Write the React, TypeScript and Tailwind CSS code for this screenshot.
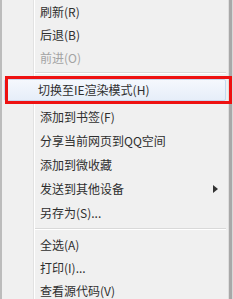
type Item = { label: string; disabled?: boolean; sub?: boolean };

const top: Item[] = [{ label: '刷新(R)' }, { label: '后退(B)' }, { label: '前进(O)', disabled: true }];
const middle: Item[] = [
  { label: '添加到书签(F)' },
  { label: '分享当前网页到QQ空间' },
  { label: '添加到微收藏' },
  { label: '发送到其他设备', sub: true },
  { label: '另存为(S)...' },
];
const bottom: Item[] = [{ label: '全选(A)' }, { label: '打印(I)...' }, { label: '查看源代码(V)' }];

const Row = ({ item, h }: { item: Item; h: string }) => (
  <div className={`relative flex items-center pl-[38px] ${h} ${item.disabled ? 'text-[#a3a3a3]' : 'text-[#2e2e2e]'}`}>
    <span>{item.label}</span>
    {item.sub && (
      <svg className="absolute left-[211px] top-1/2 -translate-y-1/2" width="5" height="8" viewBox="0 0 5 8">
        <path d="M0 0 L5 4 L0 8 Z" fill="#333" />
      </svg>
    )}
  </div>
);

const Separator = () => (
  <div className="flex h-[8px] flex-col justify-center pl-[33px] pr-[2px]">
    <div className="h-px bg-[#d9d9d9]" />
    <div className="h-px bg-white" />
  </div>
);

export default function App() {
  return (
    <div
      className="relative flex h-[299px] w-[233px] overflow-hidden bg-[#f0f0f0] text-[12px] leading-none"
      style={{ fontFamily: '"Noto Sans CJK SC", "Noto Sans", sans-serif' }}
    >
      <div className="relative flex-1 border-l-2 border-[#bcbcbc] border-r border-r-[#dedede]">
        {/* icon column divider */}
        <div className="absolute left-[31px] top-0 h-full w-px bg-[#e2e2e2]" />
        <div className="absolute left-[32px] top-0 h-full w-px bg-white" />

        <div className="relative">
          {top.map((it) => (
            <Row key={it.label} item={it} h="h-[23px]" />
          ))}
          <Separator />
          <div className="relative mx-[2px] mt-[2px] flex h-[22px] items-center rounded-[2px] border border-[#c4d8ef] bg-gradient-to-b from-[#f5f8fd] to-[#e6eef9] pl-[33px] text-[#2e2e2e]">
            切换至IE渲染模式(H)
          </div>
          <div className="h-[4px]" />
          {middle.map((it) => (
            <Row key={it.label} item={it} h="h-[24px]" />
          ))}
          <Separator />
          {bottom.map((it) => (
            <Row key={it.label} item={it} h="h-[23px]" />
          ))}
        </div>
      </div>
      <div className="w-[3px] bg-[#a8a8a8]" />
      <div className="w-px bg-[#d8d8d8]" />

      {/* annotation box */}
      <div className="absolute left-[5px] top-[76px] h-[28px] w-[227px] border-[3px] border-[#ee1111]" />
    </div>
  );
}
